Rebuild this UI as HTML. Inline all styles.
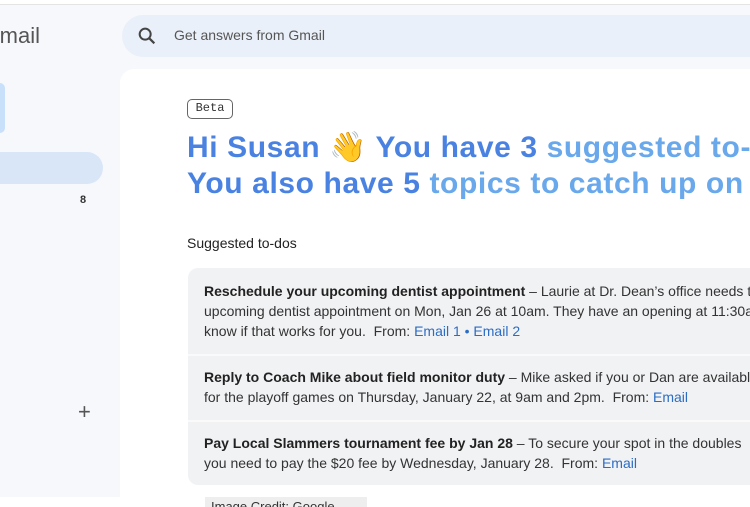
<!DOCTYPE html>
<html><head><meta charset="utf-8"><style>
*{margin:0;padding:0;box-sizing:border-box}
html,body{width:750px;height:507px;overflow:hidden}
body{background:#fff;font-family:"Liberation Sans",sans-serif;position:relative}
.app{position:absolute;left:0;top:4px;width:750px;height:493px;background:#f6f8fc;border-top:1px solid #e4e4e4;overflow:hidden}
.logo{position:absolute;left:0;top:18px;width:40px;overflow:hidden;font-size:22px;color:#555;white-space:nowrap;direction:rtl}
.search{position:absolute;left:122px;top:10px;width:628px;height:42px;border-radius:21px 0 0 21px;background:#eaf0f9}
.search span{position:absolute;left:52px;top:12px;font-size:14px;color:#555}
.compose{position:absolute;left:0;top:78px;width:5px;height:50px;border-radius:0 12px 12px 0;background:#c9e0fb}
.sel{position:absolute;left:0;top:147px;width:103px;height:32px;border-radius:0 16px 16px 0;background:#d8e6f8}
.cnt{position:absolute;left:80px;top:189px;font-size:11px;font-weight:bold;color:#333}
.plus{position:absolute;left:78px;top:394px;font-size:22px;color:#555}
.main{position:absolute;left:120px;top:64px;width:630px;height:429px;background:#fff;border-radius:14px 0 0 0}
.beta{position:absolute;left:187px;top:99px;width:46px;height:20px;border:1.5px solid #666;border-radius:5px;font-family:"Liberation Mono",monospace;font-size:12px;text-align:center;line-height:17px;color:#333}
.h{position:absolute;left:187px;top:130px;width:563px;overflow:hidden;font-size:30px;letter-spacing:0.6px;font-weight:bold;line-height:36px;white-space:nowrap;color:#4a82e2}
.h .l{color:#6aa8ec}
.st{position:absolute;left:187px;top:235px;font-size:14px;color:#222}
.list{position:absolute;left:188px;top:268px;width:562px;height:217px;background:#f1f2f4;border-radius:10px 0 0 10px;overflow:hidden}
.it{position:absolute;left:16px;font-size:14px;line-height:20px;color:#333;white-space:nowrap}
.it b{color:#222}
.a{color:#2b6cc4}
.sep{position:absolute;left:0;width:562px;height:2px;background:#fafafa}
.cr{position:absolute;left:205px;top:497px;width:162px;height:10px;background:#eee;font-size:13px;color:#333;padding-left:6px;line-height:20px;overflow:hidden}
</style></head><body>
<div class="app">
<div class="logo">Gmail</div>
<div class="search"><svg width="22" height="22" style="position:absolute;left:14px;top:10px" viewBox="0 0 24 24"><circle cx="10" cy="10" r="6" fill="none" stroke="#444" stroke-width="2.2"/><path d="M14.5 14.5L20 20" stroke="#444" stroke-width="2.4"/></svg><span>Get answers from Gmail</span></div>
<div class="compose"></div>
<div class="sel"></div>
<div class="cnt">8</div>
<div class="plus">+</div>
<div class="main"></div>
</div>
<div class="beta">Beta</div>
<div class="h">Hi Susan 👋 You have 3 <span class="l">suggested to-dos</span><br>You also have 5 <span class="l">topics to catch up on</span></div>
<div class="st">Suggested to-dos</div>
<div class="list">
<div class="it" style="top:13px"><b>Reschedule your upcoming dentist appointment</b> – Laurie at Dr. Dean’s office needs to<br>upcoming dentist appointment on Mon, Jan 26 at 10am. They have an opening at 11:30am<br>know if that works for you.&nbsp; From: <span class="a">Email 1 • Email 2</span></div>
<div class="sep" style="top:86px"></div>
<div class="it" style="top:99px"><b>Reply to Coach Mike about field monitor duty</b> – Mike asked if you or Dan are available<br>for the playoff games on Thursday, January 22, at 9am and 2pm.&nbsp; From: <span class="a">Email</span></div>
<div class="sep" style="top:152px"></div>
<div class="it" style="top:165px"><b>Pay Local Slammers tournament fee by Jan 28</b> – To secure your spot in the doubles<br>you need to pay the $20 fee by Wednesday, January 28.&nbsp; From: <span class="a">Email</span></div>
</div>
<div class="cr">Image Credit: Google</div>
</body></html>
